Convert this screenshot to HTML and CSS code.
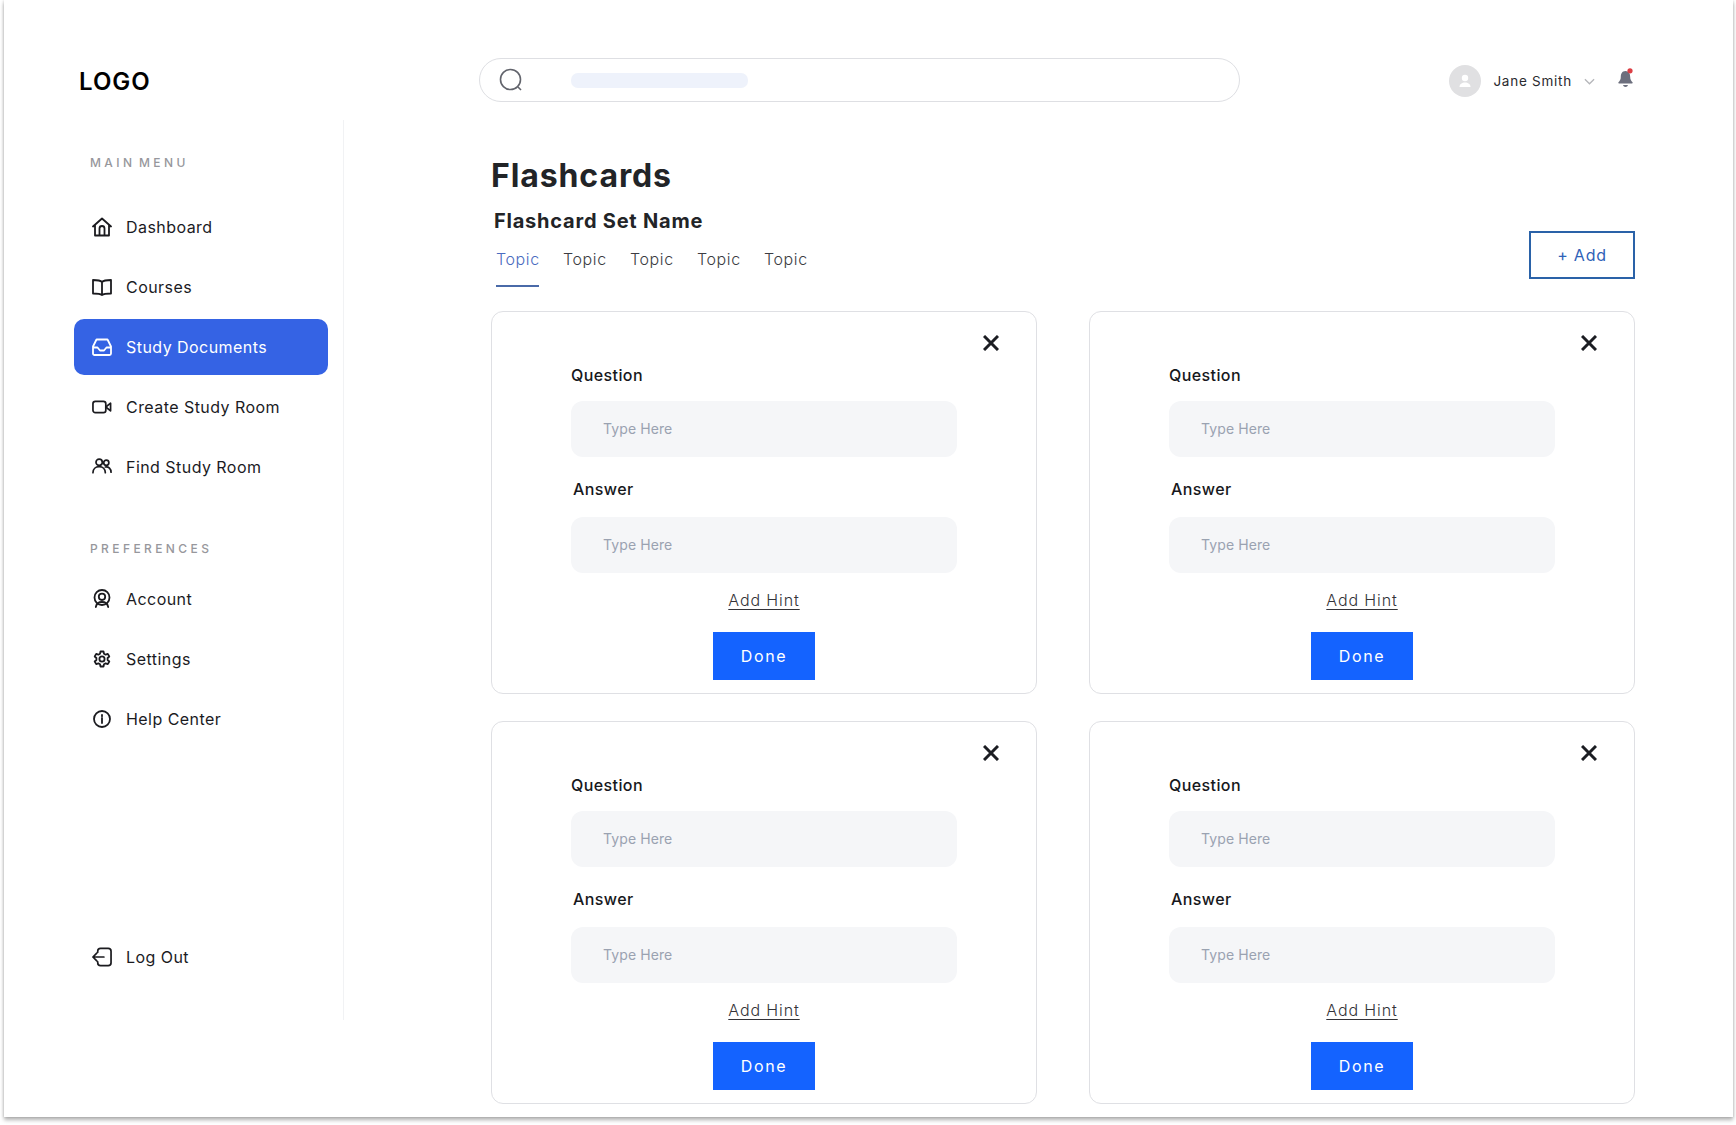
FILE: index.html
```html
<!DOCTYPE html>
<html lang="en">
<head>
<meta charset="utf-8">
<title>Flashcards</title>
<link rel="stylesheet" href="styles.css">
</head>
<body>
<div class="frame">
  <header class="topbar">
    <div class="logo">LOGO</div>
    <div class="search">
      <svg class="search-icon" viewBox="0 0 24 24"><circle cx="11.5" cy="11.5" r="10"/><path d="M19 19l3 3"/></svg>
      <span class="search-pill"></span>
    </div>
    <div class="user">
      <span class="avatar"><svg viewBox="0 0 32 32"><circle cx="16" cy="13" r="3.2"/><path d="M10.5 22c0-3 2.5-4.5 5.500-4.500s5.500 1.500 5.500 4.500z"/></svg></span>
      <span class="user-name">Jane Smith</span>
      <svg class="chevron" viewBox="0 0 12 7"><path d="M1 1l5 5 5-5"/></svg>
      <svg class="bell" viewBox="0 0 16 20"><path class="bell-body" d="M7.500 3C4 3 2.800 6 2.800 9c0 2.500-1 4-2.300 5.300-.4.500-.2 1.200.5 1.200h13c.7 0 .9-.7.500-1.200C13.200 13 12.200 11.500 12.200 9c0-3-1.200-6-4.700-6z"/><path class="bell-body" d="M5 17h5c-.3 1.300-1.300 2-2.500 2S5.300 18.300 5 17z"/><circle class="bell-dot" cx="12" cy="2.800" r="2.600"/></svg>
    </div>
  </header>
  <div class="body">
    <aside class="sidebar">
      <div class="section-label label-main">MAIN MENU</div>
      <nav class="nav">
        <a class="nav-item"><svg class="icon" viewBox="0 0 20 20"><path d="M1 9.500L10 1.500l9 8M3 8v10.500h14V8M7.500 18.500V11.500a2.500 2.500 0 0 1 5 0v7"/></svg>Dashboard</a>
        <a class="nav-item"><svg class="icon" viewBox="0 0 20 20"><path d="M10 5C8.500 3.500 6 3 1 3v13.500c5 0 7.500.3 9 1.500 1.500-1.200 4-1.500 9-1.500V3c-5 0-7.500.5-9 2zM10 5v13"/></svg>Courses</a>
        <a class="nav-item active"><svg class="icon" viewBox="0 0 20 20"><path d="M1 9.500L4.500 2.500h11L19 9.500v7a1.500 1.500 0 0 1-1.500 1.500h-15A1.500 1.500 0 0 1 1 16.500zM1 10.500h4.500l2.500 3h4l2.500-3H19"/></svg>Study Documents</a>
        <a class="nav-item"><svg class="icon" viewBox="0 0 21 20"><rect x="1" y="4" width="13.500" height="12" rx="2.500"/><path d="M14.500 10l5-4v8z"/></svg>Create Study Room</a>
        <a class="nav-item"><svg class="icon" viewBox="0 0 21 20"><circle cx="7.500" cy="5" r="3.300"/><circle cx="15" cy="5.500" r="2.700"/><path d="M1 16c0-4 2.800-6.300 6.500-6.300S14 12 14 16M14 10c3.500-.6 6 2 6 5.500"/></svg>Find Study Room</a>
      </nav>
      <div class="section-label label-prefs">PREFERENCES</div>
      <nav class="nav">
        <a class="nav-item"><svg class="icon" viewBox="0 0 20 20"><circle cx="10" cy="8.500" r="7.500"/><circle cx="10" cy="7.800" r="3.200"/><path d="M3.800 18c.6-3.300 3-5 6.200-5s5.600 1.700 6.200 5"/></svg>Account</a>
        <a class="nav-item"><svg class="icon" viewBox="0 0 20 20"><circle cx="10" cy="10" r="2.600"/><path d="M8.500 2.500h3l.5 2.300 1.600.9 2.200-.8 1.500 2.600-1.700 1.500v2l1.700 1.500-1.500 2.600-2.200-.8-1.600.9-.5 2.300h-3L8 15.200l-1.600-.9-2.200.8-1.500-2.600 1.700-1.500v-2L2.700 7.500l1.500-2.600 2.200.8L8 4.800z"/></svg>Settings</a>
        <a class="nav-item"><svg class="icon" viewBox="0 0 20 20"><circle cx="10" cy="10" r="8"/><path d="M10 9v5M10 5.800v1.400"/></svg>Help Center</a>
      </nav>
      <div class="nav logout">
        <a class="nav-item"><svg class="icon" viewBox="0 0 21 20"><path d="M6 5V4a3 3 0 0 1 3-3h8a3 3 0 0 1 3 3v12a3 3 0 0 1-3 3H9a3 3 0 0 1-3-3v-1M12.500 10H1M5 6l-4 4 4 4"/></svg>Log Out</a>
      </div>
    </aside>
    <main class="main">
      <h1 class="page-title">Flashcards</h1>
      <div class="set-head">
        <div>
          <h2 class="set-title">Flashcard Set Name</h2>
          <div class="tabs">
            <a class="tab active">Topic</a>
            <a class="tab">Topic</a>
            <a class="tab">Topic</a>
            <a class="tab">Topic</a>
            <a class="tab">Topic</a>
          </div>
        </div>
        <button class="add-btn">+ Add</button>
      </div>
      <section class="cards">
        <article class="card">
          <svg class="close" viewBox="0 0 16 16"><path d="M1 1l14 14M15 1L1 15"/></svg>
          <div class="field-label">Question</div>
          <div class="input">Type Here</div>
          <div class="field-label answer">Answer</div>
          <div class="input input-answer">Type Here</div>
          <a class="hint">Add Hint</a>
          <button class="done">Done</button>
        </article>
        <article class="card">
          <svg class="close" viewBox="0 0 16 16"><path d="M1 1l14 14M15 1L1 15"/></svg>
          <div class="field-label">Question</div>
          <div class="input">Type Here</div>
          <div class="field-label answer">Answer</div>
          <div class="input input-answer">Type Here</div>
          <a class="hint">Add Hint</a>
          <button class="done">Done</button>
        </article>
        <article class="card">
          <svg class="close" viewBox="0 0 16 16"><path d="M1 1l14 14M15 1L1 15"/></svg>
          <div class="field-label">Question</div>
          <div class="input">Type Here</div>
          <div class="field-label answer">Answer</div>
          <div class="input input-answer">Type Here</div>
          <a class="hint">Add Hint</a>
          <button class="done">Done</button>
        </article>
        <article class="card">
          <svg class="close" viewBox="0 0 16 16"><path d="M1 1l14 14M15 1L1 15"/></svg>
          <div class="field-label">Question</div>
          <div class="input">Type Here</div>
          <div class="field-label answer">Answer</div>
          <div class="input input-answer">Type Here</div>
          <a class="hint">Add Hint</a>
          <button class="done">Done</button>
        </article>
      </section>
    </main>
  </div>
</div>
</body>
</html>
```

FILE: styles.css
```css
* { box-sizing: border-box; }
html, body { margin: 0; padding: 0; background: #fff; }
body {
  font-family: Inter, "Liberation Sans", sans-serif;
  color: #1b1b1f;
  height: 1125px;
  overflow: hidden;
}
.frame {
  margin-left: 4px;
  width: 1729px;
  height: 1117px;
  padding-top: 58px;
  background: #fff;
  box-shadow: 0 3px 4px rgba(0,0,0,.3), -1px 0 2px rgba(0,0,0,.08), 1px 0 2px rgba(0,0,0,.08);
}
.topbar {
  display: flex;
  align-items: center;
  height: 44px;
  padding: 0 98px 0 75px;
}
.logo {
  width: 400px;
  padding-top: 2px;
  font-size: 24px;
  font-weight: 600;
  color: #000;
  letter-spacing: 1px;
}
.search {
  display: flex;
  align-items: center;
  gap: 48px;
  width: 761px;
  height: 44px;
  padding-left: 18.500px;
  border: 1.5px solid #dedfe3;
  border-radius: 22px;
}
.search-icon { width: 24px; height: 24px; fill: none; stroke: #62646c; stroke-width: 1.6; }
.search-pill { width: 177px; height: 15px; border-radius: 7px; background: #eef2fb; }
.user { display: flex; align-items: center; margin-left: auto; padding-top: 2px; }
.avatar { width: 32px; height: 32px; border-radius: 50%; background: #e0e0e2; }
.avatar svg { display: block; width: 32px; height: 32px; fill: #fff; }
.user-name { margin-left: 12px; font-size: 13.500px; letter-spacing: .75px; color: #2a2a2e; }
.chevron { width: 11px; height: 7px; margin-left: 12px; fill: none; stroke: #b5b6ba; stroke-width: 1.4; }
.bell { width: 16px; height: 20px; margin: -6px 1px 0 23px; }
.bell-body { fill: #6c6f7d; }
.bell-dot { fill: #dc3f45; }

.body { display: flex; height: 900px; margin-top: 18px; }
.sidebar {
  display: flex;
  flex-direction: column;
  width: 340px;
  padding-left: 70px;
  border-right: 1px solid #f1f2f4;
}
.section-label {
  padding-left: 16px;
  height: 16px;
  line-height: 16px;
  font-size: 12px;
  font-weight: 500;
  letter-spacing: 3.400px;
  word-spacing: -3px;
  color: #97979c;
}
.label-main { margin-top: 35px; margin-bottom: 28px; }
.label-prefs { margin-top: 46px; margin-bottom: 14px; }
.nav { display: flex; flex-direction: column; gap: 4px; }
.nav-item {
  display: flex;
  align-items: center;
  gap: 14px;
  width: 254px;
  height: 56px;
  padding-left: 18px;
  border-radius: 10px;
  font-size: 16px;
  font-weight: 400;
  letter-spacing: .45px;
  color: #1b1b1f;
}
.nav-item.active { background: #3563e4; color: #fff; }
.icon {
  flex: none;
  width: 20px;
  height: 20px;
  fill: none;
  stroke: currentColor;
  stroke-width: 1.8;
  stroke-linejoin: round;
  stroke-linecap: round;
}
.logout { margin-top: auto; margin-bottom: 35px; }

.main { width: 1291px; padding: 36px 0 0 147px; }
.page-title {
  margin: 0;
  height: 40px;
  line-height: 40px;
  font-size: 32px;
  font-weight: 700;
  letter-spacing: .9px;
  color: #222427;
}
.set-head {
  display: flex;
  justify-content: space-between;
  align-items: flex-end;
  width: 1144px;
  margin-top: 13px;
}
.set-title {
  margin: 0 0 0 3px;
  height: 24px;
  line-height: 24px;
  font-size: 20px;
  font-weight: 700;
  letter-spacing: .78px;
  color: #222427;
}
.tabs { display: flex; gap: 24px; margin: 16px 0 0 5px; }
.tab {
  width: 43px;
  height: 38px;
  line-height: 20px;
  font-size: 16px;
  font-weight: 300;
  letter-spacing: .6px;
  white-space: nowrap;
  color: #3c3c42;
}
.tab.active { color: #4a6bc0; border-bottom: 2px solid #4a6aa8; }
.add-btn {
  width: 106px;
  height: 48px;
  margin-bottom: 8px;
  background: #fff;
  border: 2px solid #2a62a8;
  font: 400 16px Inter, "Liberation Sans", sans-serif;
  letter-spacing: .8px;
  color: #2f62b8;
}
.cards {
  display: grid;
  grid-template-columns: 546px 546px;
  grid-auto-rows: 383px;
  gap: 27px 52px;
  margin-top: 24px;
}
.card {
  position: relative;
  display: flex;
  flex-direction: column;
  padding: 53px 79px 0;
  border: 1px solid #dfe0e4;
  border-radius: 12px;
  background: #fff;
}
.close {
  position: absolute;
  top: 23px;
  right: 37px;
  width: 16px;
  height: 16px;
  fill: none;
  stroke: #1b1d22;
  stroke-width: 3;
}
.field-label {
  height: 20px;
  line-height: 20px;
  font-size: 16px;
  font-weight: 500;
  letter-spacing: .4px;
  color: #17181c;
}
.field-label.answer { margin: 22px 0 18px 2px; }
.input {
  height: 56px;
  margin-top: 16px;
  padding-left: 32px;
  line-height: 56px;
  border-radius: 12px;
  background: #f5f6f8;
  font-size: 14px;
  letter-spacing: .1px;
  color: #9aa2b1;
}
.input-answer { margin-top: 0; }
.hint {
  align-self: center;
  height: 20px;
  margin-top: 17px;
  line-height: 20px;
  font-size: 16px;
  font-weight: 300;
  letter-spacing: .9px;
  color: #333338;
  text-decoration: underline;
  text-underline-offset: 3px;
}
.done {
  align-self: center;
  width: 102px;
  height: 48px;
  margin-top: 22px;
  border: 0;
  background: #1463ff;
  color: #fff;
  font: 400 16px Inter, "Liberation Sans", sans-serif;
  letter-spacing: 1.6px;
}
```
